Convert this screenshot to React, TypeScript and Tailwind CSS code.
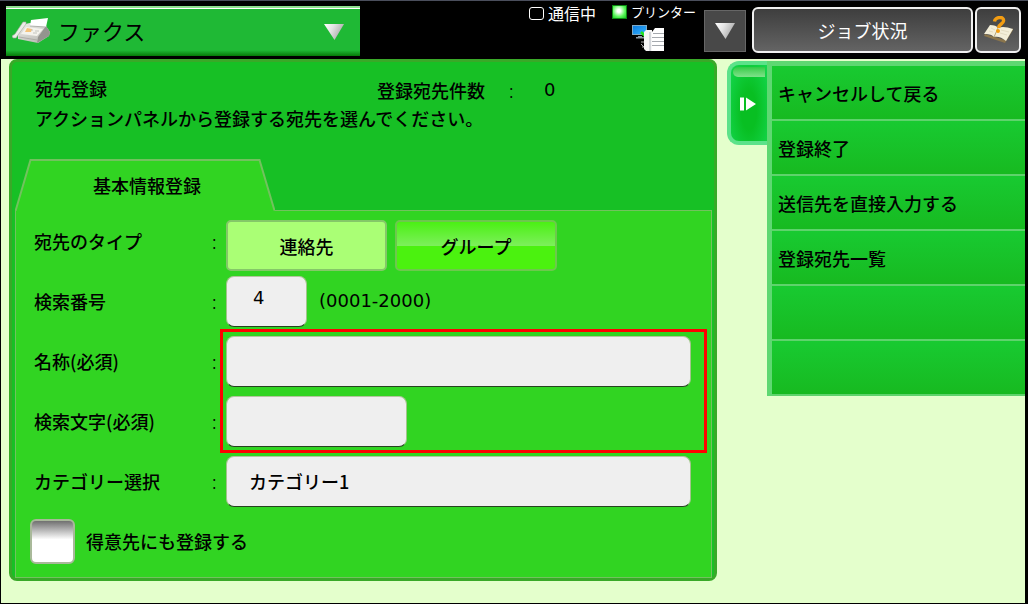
import type { ReactNode } from "react";

function DownTriangle() {
  return (
    <svg width="20" height="16" viewBox="0 0 20 16" aria-hidden="true">
      <defs>
        <linearGradient id="tri" x1="0" y1="0" x2="1" y2="0.4">
          <stop offset="0" stopColor="#ffffff" />
          <stop offset="0.45" stopColor="#e4e4e4" />
          <stop offset="1" stopColor="#a8a8a8" />
        </linearGradient>
      </defs>
      <path d="M0 0H20L10.5 16Z" fill="url(#tri)" />
    </svg>
  );
}

function FaxIcon() {
  return (
    <svg width="38" height="26" viewBox="0 0 38 26" aria-hidden="true">
      <defs>
        <linearGradient id="faxBody" x1="0" y1="0" x2="0.6" y2="1">
          <stop offset="0" stopColor="#efefeb" />
          <stop offset="1" stopColor="#bdbdb7" />
        </linearGradient>
      </defs>
      <path d="M13 6L18 5L34 8L38 14L37 18L26 25L6 21L6 16Z" fill="url(#faxBody)" />
      <path d="M34 8L38 14L37 18L25 25L26 19Z" fill="#94948f" />
      <path d="M19 2L36 0L34 9L18 8Z" fill="#ffffff" />
      <path d="M18 8L34 9" stroke="#a2a29c" strokeWidth="0.8" />
      <path d="M14 9L31 11L25 18L9 16Z" fill="#f4f3ed" />
      <path d="M15 10L20 11L19 14L13 14Z" fill="#f4c37a" />
      <path d="M23 13H27M21 15H25M19 12H21" stroke="#b9b9b3" strokeWidth="0.8" />
      <path d="M7 19L25 22" stroke="#a6a6a0" strokeWidth="0.8" />
      <path d="M11 4L14 4L14 6L6 17L4 20L1 20L0 18L3 16Z" fill="#ecece8" stroke="#a4a49e" strokeWidth="0.6" />
    </svg>
  );
}

function PrinterIcon() {
  return (
    <svg width="33" height="27" viewBox="0 0 33 27" aria-hidden="true">
      <defs>
        <linearGradient id="monitor" x1="0" y1="0" x2="1" y2="1">
          <stop offset="0" stopColor="#0a78dc" />
          <stop offset="1" stopColor="#35b4ff" />
        </linearGradient>
      </defs>
      <rect x="0.5" y="0.5" width="14" height="9" fill="url(#monitor)" stroke="#7fa9c4" />
      <path d="M6 11H10V12H6ZM4 12H13V13.500H4Z" fill="#8b98a0" />
      <path d="M9 7L13 11" stroke="#22e322" strokeWidth="2.6" />
      <path d="M9 17H13M10 22H14M9 19L12 22" stroke="#a9a9a9" strokeWidth="1" />
      <path d="M12 7L14 5H20V26H14L12 24Z" fill="#f6f6f6" />
      <path d="M17 7H19V26H17Z" fill="#d3d6da" />
      <path d="M20 7L23 3H32V26H20Z" fill="#ffffff" />
      <path d="M21 8.500H32M20 12.500H32M20 16.500H32M20 20.500H32" stroke="#a5a9ae" strokeWidth="1.2" />
    </svg>
  );
}

function HelpBookIcon() {
  return (
    <svg width="31" height="28" viewBox="0 0 31 28" aria-hidden="true">
      <path d="M1 20L22 27L30 14V12L22 24L2 18Z" fill="#8a754c" />
      <path d="M1 18L7 9C11 9 14 10 15 12C19 10 24 11 30 13L23 25C19 21 14 20 11 21C8 18 5 18 1 18Z" fill="#f3eed9" />
      <path d="M15 12L11 21" stroke="#b3a67f" strokeWidth="1" />
      <path d="M8 12L12 14M6 15L10 16M18 14L26 16M17 17L24 19" stroke="#dbd3b7" strokeWidth="0.7" />
      <path
        d="M11.500 5.500C12 0.500 21.500 0 20.500 5C20 8.500 16 7.500 15.500 12"
        fill="none"
        stroke="#f39d12"
        strokeWidth="3.4"
      />
      <circle cx="15" cy="15" r="2" fill="#f39d12" />
    </svg>
  );
}

function Header() {
  return (
    <header className="flex h-[59px] items-start border-t border-[#4a4e5c] bg-black pl-1.5 pr-[7px] font-normal text-white">
      <button
        type="button"
        className="mt-[5px] flex h-[50px] w-[354px] items-start border-t-2 border-[#8fe08f] bg-[linear-gradient(#ffffff_1px,#1fb935_1px,#1fb935_88%,#067a08_100%)] pl-1.5 pr-4 pt-2 text-black"
      >
        <span className="pt-0.5">
          <FaxIcon />
        </span>
        <span className="ml-2 text-[22px] leading-7">ファクス</span>
        <span className="ml-auto pt-2">
          <DownTriangle />
        </span>
      </button>
      <div className="ml-auto flex items-start">
        <div className="flex items-center gap-1">
          <span className="h-[13px] w-[15px] rounded-[3px] border border-white" />
          <span className="text-base leading-6">通信中</span>
        </div>
        <div className="ml-4 w-[92px]">
          <div className="flex h-[22px] items-center gap-1">
            <span className="h-3.5 w-[15px] border border-[#0b8a12] bg-[radial-gradient(circle_at_45%_40%,#ffffff_15%,#5af75a_60%,#16c520_100%)]" />
            <span className="whitespace-nowrap text-[13px] leading-5">プリンター</span>
          </div>
          <div className="pl-5 pt-0.5">
            <PrinterIcon />
          </div>
        </div>
        <button
          type="button"
          aria-label="状態を開く"
          className="mt-[9px] flex h-[42px] w-[42px] items-center justify-center border border-[#666] bg-[#484848]"
        >
          <DownTriangle />
        </button>
        <button
          type="button"
          className="ml-1.5 mt-1.5 h-[46px] w-[221px] rounded-md border-2 border-[#f0f0f0] bg-linear-to-b from-[#3e3e3e] to-[#646464] text-[18px]"
        >
          ジョブ状況
        </button>
        <button
          type="button"
          aria-label="ヘルプ"
          className="ml-0.5 mt-1.5 flex h-[46px] w-[46px] items-center justify-center rounded-md border-2 border-[#f0f0f0] bg-linear-to-b from-[#3e3e3e] to-[#646464]"
        >
          <HelpBookIcon />
        </button>
      </div>
    </header>
  );
}

const fieldClass =
  "h-[51px] rounded-lg border border-[#a3c48c] border-t-[#b5c3a0] border-b-[#26421f] bg-[#efefef] text-[18px] font-medium text-black outline-none";

function Row({ label, htmlFor, children }: { label: string; htmlFor?: string; children: ReactNode }) {
  return (
    <div className="flex h-[60px] items-center pl-[18px] pr-5">
      <label htmlFor={htmlFor} className="w-[178px] shrink-0">
        {label}
      </label>
      <span className="w-3.5 shrink-0 font-light">:</span>
      {children}
    </div>
  );
}

function RegistrationPanel() {
  return (
    <main className="min-w-0 flex-1 self-start rounded-lg border-[3px] border-[#39a928] bg-[#17c025] pl-[3px] pr-[2px]">
      <div className="flex h-[97px] flex-col pl-5 pt-2.5">
        <div className="flex">
          <h1 className="w-[342px] leading-8 font-medium">宛先登録</h1>
          <p className="flex pt-0.5 leading-8">
            <span className="w-[132px]">登録宛先件数</span>
            <span className="w-[35px] font-light">:</span>
            <span className="font-['DejaVu_Sans'] font-normal">0</span>
          </p>
        </div>
        <p className="-mt-1 leading-8">アクションパネルから登録する宛先を選んでください。</p>
      </div>
      <button type="button" className="relative z-10 -mb-px flex h-[52px] w-[260px] items-center justify-center">
        <svg
          className="absolute inset-0 h-full w-full"
          viewBox="0 0 260 52"
          preserveAspectRatio="none"
          aria-hidden="true"
        >
          <path d="M0.500 52L15.500 1H244.500L259.500 52Z" fill="#31d422" />
          <path d="M0.500 52L15.500 1H244.500L259.500 51.500" fill="none" stroke="#72c25e" strokeWidth="2" />
        </svg>
        <span className="relative pl-1">基本情報登録</span>
      </button>
      <form className="border border-[#72c25e] bg-[#31d422] pb-1.5" onSubmit={(e) => e.preventDefault()}>
        <Row label="宛先のタイプ">
          <div className="flex gap-2 self-end">
            <button
              type="button"
              className="h-[51px] w-[161px] rounded-[5px] border-2 border-[#84c868] bg-[#aaff75]"
            >
              連絡先
            </button>
            <button
              type="button"
              className="h-[51px] w-[162px] rounded-[5px] border-2 border-[#6dc84d] bg-[linear-gradient(#4bf014,#7cf05a_50%,#4bf20f_50%,#4bf20f)]"
            >
              グループ
            </button>
          </div>
        </Row>
        <Row label="検索番号" htmlFor="number">
          <input id="number" defaultValue="4" className={`${fieldClass} w-[81px] pb-2 pl-[26px] font-['DejaVu_Sans']`} />
          <span className="ml-3 font-['DejaVu_Sans'] font-normal">(0001-2000)</span>
        </Row>
        <div className="relative">
          <Row label="名称(必須)" htmlFor="name">
            <input id="name" className={`${fieldClass} min-w-0 flex-1 px-5`} />
          </Row>
          <Row label="検索文字(必須)" htmlFor="kana">
            <input id="kana" className={`${fieldClass} w-[181px] px-5`} />
          </Row>
          <div className="pointer-events-none absolute -bottom-0.5 -top-0.5 left-[204px] right-1 border-[3px] border-[#ff0000]" />
        </div>
        <Row label="カテゴリー選択" htmlFor="category">
          <select id="category" className={`${fieldClass} min-w-0 flex-1 appearance-none px-[22px]`}>
            <option>カテゴリー1</option>
          </select>
        </Row>
        <label className="flex h-[60px] items-center gap-[11px] pl-3.5">
          <input
            type="checkbox"
            className="h-[45px] w-[45px] appearance-none rounded-md border-2 border-[#a9b99a] bg-[linear-gradient(#707070,#ffffff_45%)]"
          />
          得意先にも登録する
        </label>
      </form>
    </main>
  );
}

const actions = ["キャンセルして戻る", "登録終了", "送信先を直接入力する", "登録宛先一覧", "", ""];

function ActionPanel() {
  return (
    <aside className="flex w-[298px] shrink-0 items-start pt-0.5">
      <button
        type="button"
        aria-label="アクションパネルを閉じる"
        className="flex h-[84px] w-10 flex-col items-center rounded-l-xl border-4 border-r-0 border-[#5ce28a] bg-[radial-gradient(ellipse_at_50%_60%,#08bf22_30%,#14d850_100%)]"
      >
        <span className="mt-0.5 h-2.5 w-8 rounded-l-lg bg-linear-to-b from-[#2ecb45] to-[#7ee28a]" />
        <svg className="mr-0.5 mt-5" width="16" height="14" viewBox="0 0 16 14" aria-hidden="true">
          <path d="M0 0.500H4V13.500H0ZM6 0.500L16 7L6 13.500Z" fill="#ffffff" />
        </svg>
      </button>
      <nav className="min-w-0 flex-1 border-l-[5px] border-t-[5px] border-[#5ed872]">
        {actions.map((action, i) => (
          <button
            key={i}
            type="button"
            disabled={!action}
            className="block h-[55px] w-full border-b-2 border-[#5ed36c] bg-linear-to-b from-[#18ca31] to-[#17ba20] px-1.5 text-left"
          >
            {action}
          </button>
        ))}
      </nav>
    </aside>
  );
}

export default function App() {
  return (
    <div className="flex min-h-screen flex-col bg-black font-['Noto_Sans_CJK_JP',sans-serif] text-[18px] font-medium leading-7 text-black">
      <Header />
      <div className="mb-px ml-px mr-[3px] flex flex-1 gap-2.5 bg-[#e4ffcc] pl-2">
        <RegistrationPanel />
        <ActionPanel />
      </div>
    </div>
  );
}
